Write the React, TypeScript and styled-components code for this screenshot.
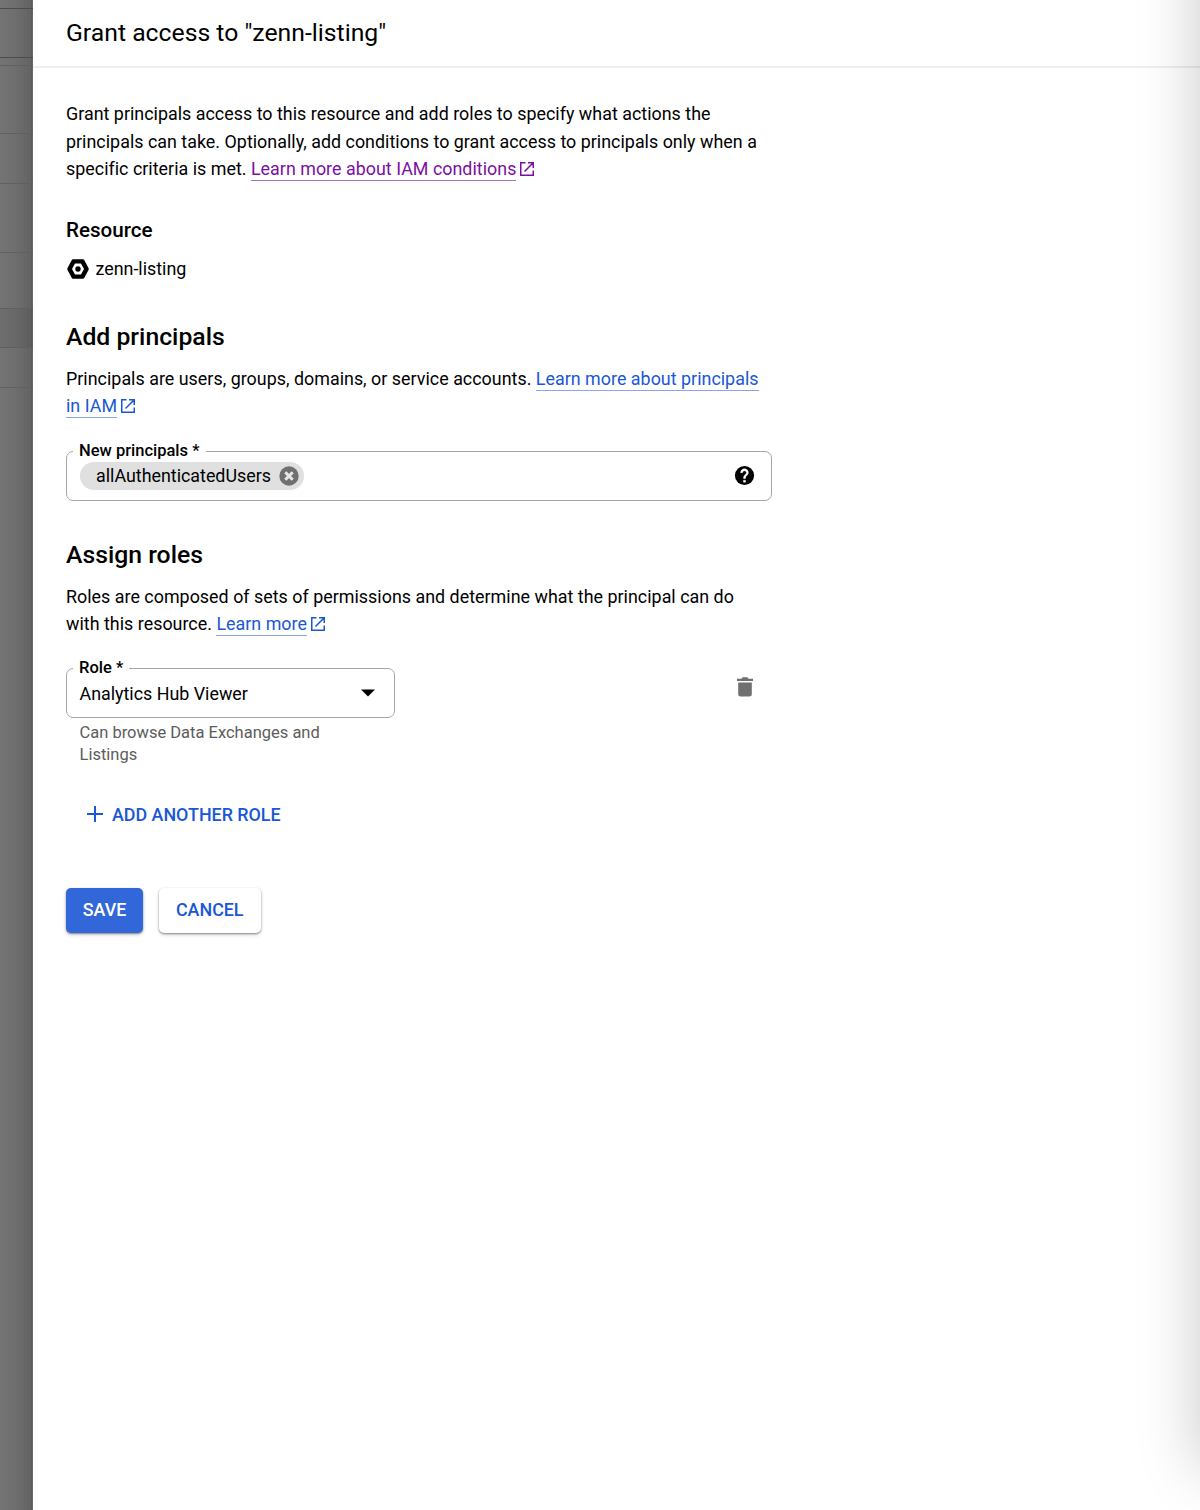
import styled, { createGlobalStyle } from 'styled-components';

const GlobalStyle = createGlobalStyle`
  * {
    box-sizing: border-box;
  }

  body {
    margin: 0;
    background-color: #fff;
    color: #000;
    font-family: Roboto, 'Liberation Sans', sans-serif;
  }
`;

const Page = styled.div`
  display: flex;
  height: 1510px;
  overflow: hidden;
`;

const Backdrop = styled.div`
  width: 33px;
  flex-shrink: 0;
  display: flex;
  flex-direction: column;
  background: linear-gradient(to right, #747474 0, #6f6f6f 14px, #636363 31px, #555 32px, #7c7c7c 33px);
`;

const BackdropRow = styled.div<{ $height: number; $strong?: boolean; $dark?: boolean }>`
  height: ${({ $height }) => $height}px;
  flex-shrink: 0;
  border-bottom: 1px solid ${({ $strong }) => ($strong ? '#4c4c4c' : '#606060')};
  background-color: ${({ $dark }) => ($dark ? 'rgba(0, 0, 0, 0.05)' : 'transparent')};
`;

const Panel = styled.main`
  position: relative;
  flex: 1;
  background-color: #fff;
`;

const EdgeShadow = styled.div`
  position: absolute;
  top: -100px;
  bottom: 42px;
  left: 100%;
  width: 200px;
  box-shadow: 0 0 58px rgba(0, 0, 0, 0.22);
`;

const Header = styled.header`
  height: 68px;
  padding: 0 33px;
  border-bottom: 2px solid #eeeeee;
`;

const Title = styled.h1`
  margin: 0;
  font-size: 24.75px;
  line-height: 66px;
  font-weight: 400;
`;

const Content = styled.div`
  width: 772px;
  padding: 32px 33px 0;
`;

const Text = styled.p`
  margin: 0;
  width: 706px;
  font-size: 17.875px;
  line-height: 27.5px;
  letter-spacing: 0.02px;
`;

const Link = styled.a<{ $visited?: boolean }>`
  color: ${({ $visited }) => ($visited ? '#7b0fa2' : '#1a57d6')};
  text-decoration: none;

  span {
    padding-bottom: 1px;
    border-bottom: 1px solid ${({ $visited }) => ($visited ? '#b06cc8' : '#8aa6ea')};
  }

  svg {
    margin-left: 3px;
    vertical-align: -2px;
  }
`;

const Subheading = styled.h3`
  margin: 33px 0 0;
  font-size: 20.625px;
  line-height: 28px;
  font-weight: 500;
`;

const Resource = styled.div`
  display: flex;
  align-items: center;
  gap: 5.5px;
  margin-top: 11px;
  height: 28px;
  font-size: 17.875px;
`;

const Heading = styled.h2`
  margin: 38px 0 12px;
  font-size: 24.75px;
  line-height: 32px;
  font-weight: 500;
`;

const Field = styled.fieldset<{ $width: number; $top: number }>`
  display: block;
  width: ${({ $width }) => $width}px;
  min-width: 0;
  height: 60px;
  margin: ${({ $top }) => $top}px 0 0;
  padding: 0;
  border: 1px solid #a6a6a6;
  border-radius: 7px;
`;

const Legend = styled.legend`
  margin-left: 6px;
  padding: 0 6px 1px;
  font-size: 16.5px;
  line-height: 20px;
  font-weight: 500;
`;

const FieldBody = styled.div<{ $end: number }>`
  display: flex;
  align-items: center;
  justify-content: space-between;
  height: 28px;
  padding: 0 ${({ $end }) => $end}px 0 12.5px;
  font-size: 17.875px;
`;

const Chip = styled.span`
  display: flex;
  align-items: center;
  gap: 8px;
  height: 28px;
  padding: 0 5px 0 16.5px;
  border-radius: 14px;
  background-color: #e0e0e0;
`;

const RoleRow = styled.div`
  display: flex;
  justify-content: space-between;
  padding-right: 16.5px;
`;

const TrashButton = styled.button`
  margin-top: 38.5px;
  padding: 0;
  width: 22px;
  height: 22px;
  border: 0;
  background: none;
`;

const Hint = styled.p`
  margin: 4px 0 0 13.5px;
  width: 290px;
  color: #5c5c5c;
  font-size: 16.5px;
  line-height: 22px;
`;

const AddButton = styled.button`
  display: flex;
  align-items: center;
  gap: 8px;
  margin: 34px 0 0 20px;
  padding: 0;
  height: 28px;
  border: 0;
  background: none;
  color: #1a57d6;
  font: 500 17.875px Roboto, sans-serif;
`;

const Actions = styled.div`
  display: flex;
  gap: 16px;
  margin-top: 59.5px;
`;

const Button = styled.button<{ $primary?: boolean }>`
  width: ${({ $primary }) => ($primary ? 77 : 101.5)}px;
  height: 45px;
  padding: 0 0 2px;
  border: 0;
  border-radius: 5px;
  background-color: ${({ $primary }) => ($primary ? '#3167d8' : '#fff')};
  color: ${({ $primary }) => ($primary ? '#fff' : '#1a57d6')};
  box-shadow: 0 1px 2px rgba(0, 0, 0, 0.4), 0 2px 4px rgba(0, 0, 0, 0.14);
  font: 500 17.875px Roboto, sans-serif;
`;

const rows = [
  { height: 9, strong: true },
  { height: 49, strong: true },
  { height: 8 },
  { height: 68 },
  { height: 50 },
  { height: 69 },
  { height: 56 },
  { height: 39, dark: true },
  { height: 40 },
];

const ExternalIcon = () => (
  <svg width="16" height="16" viewBox="0 0 16 16" fill="none" stroke="currentColor" strokeWidth="1.5">
    <path d="M6.5 1.75H1.75v12.5h12.5V9.5M9 1.75h5.25V7M14.25 1.75L5.5 10.5" />
  </svg>
);

const ResourceIcon = () => (
  <svg width="24" height="24" viewBox="0 0 24 24">
    <path fillRule="evenodd" d="M7 2.3h10q.8 0 1.2.7l4.3 8q.5 1 0 2l-4.3 8q-.4.7-1.2.7H7q-.8 0-1.2-.7l-4.3-8q-.5-1 0-2l4.3-8q.4-.7 1.2-.7zM9 6.500L6 12l3 5.500h6l3-5.500-3-5.500z" />
    <circle cx="12" cy="12" r="2.7" />
  </svg>
);

const ClearIcon = () => (
  <svg width="20" height="20" viewBox="0 0 20 20">
    <circle cx="10" cy="10" r="9.7" fill="#707070" />
    <path d="M6.3 6.3l7.4 7.4M13.7 6.3l-7.4 7.4" stroke="#e8e8e8" strokeWidth="3" />
  </svg>
);

const HelpIcon = () => (
  <svg width="23" height="23" viewBox="0 0 24 24">
    <circle cx="12" cy="12" r="10" />
    <path
      d="M13 19h-2v-2h2v2zm2.070-7.750l-.9.920C13.450 12.900 13 13.500 13 15h-2v-.5c0-1.100.450-2.100 1.170-2.830l1.240-1.260c.370-.360.590-.860.590-1.410 0-1.100-.900-2-2-2s-2 .900-2 2H8c0-2.210 1.790-4 4-4s4 1.790 4 4c0 .880-.360 1.680-.930 2.250z"
      fill="#fff"
      stroke="#fff"
      strokeWidth="0.5"
    />
  </svg>
);

const TrashIcon = () => (
  <svg width="22" height="22" viewBox="0 0 22 22" fill="#707070">
    <path d="M3 2.800h4.500q.3-1.500 1.500-1.500h4q1.200 0 1.500 1.500H19v2.200H3zM4.200 6.400h13.600V18q0 2.500-2.500 2.500H6.700q-2.500 0-2.500-2.500z" />
  </svg>
);

const App: React.FC = () => {
  return (
    <Page>
      <GlobalStyle />
      <Backdrop>
        {rows.map((row, index) => (
          <BackdropRow key={index} $height={row.height} $strong={row.strong} $dark={row.dark} />
        ))}
      </Backdrop>

      <Panel>
        <Header>
          <Title>Grant access to "zenn-listing"</Title>
        </Header>

        <Content>
          <Text>
            Grant principals access to this resource and add roles to specify what actions the
            <br />
            principals can take. Optionally, add conditions to grant access to principals only when a
            <br />
            specific criteria is met.{' '}
            <Link $visited>
              <span>Learn more about IAM conditions</span>
              <ExternalIcon />
            </Link>
          </Text>

          <Subheading>Resource</Subheading>
          <Resource>
            <ResourceIcon />
            <span>zenn-listing</span>
          </Resource>

          <Heading>Add principals</Heading>
          <Text>
            Principals are users, groups, domains, or service accounts.{' '}
            <Link>
              <span>
                Learn more about principals
                <br />
                in IAM
              </span>
              <ExternalIcon />
            </Link>
          </Text>
          <Field $width={706} $top={21}>
            <Legend>New principals *</Legend>
            <FieldBody $end={15}>
              <Chip>
                allAuthenticatedUsers
                <ClearIcon />
              </Chip>
              <HelpIcon />
            </FieldBody>
          </Field>

          <Heading>Assign roles</Heading>
          <Text>
            Roles are composed of sets of permissions and determine what the principal can do
            <br />
            with this resource.{' '}
            <Link>
              <span>Learn more</span>
              <ExternalIcon />
            </Link>
          </Text>
          <RoleRow>
            <div>
              <Field $width={329} $top={20.5}>
                <Legend>Role *</Legend>
                <FieldBody $end={19}>
                  Analytics Hub Viewer
                  <svg width="14" height="8" viewBox="0 0 14 8">
                    <path d="M0 .5h14L7 7.500z" />
                  </svg>
                </FieldBody>
              </Field>
              <Hint>
                Can browse Data Exchanges and
                <br />
                Listings
              </Hint>
            </div>
            <TrashButton aria-label="Delete role">
              <TrashIcon />
            </TrashButton>
          </RoleRow>

          <AddButton>
            <svg width="18" height="18" viewBox="0 0 18 18" stroke="currentColor" strokeWidth="2">
              <path d="M9 1v16M1 9h16" />
            </svg>
            ADD ANOTHER ROLE
          </AddButton>

          <Actions>
            <Button $primary>SAVE</Button>
            <Button>CANCEL</Button>
          </Actions>
        </Content>
        <EdgeShadow />
      </Panel>
    </Page>
  );
};

export default App;
